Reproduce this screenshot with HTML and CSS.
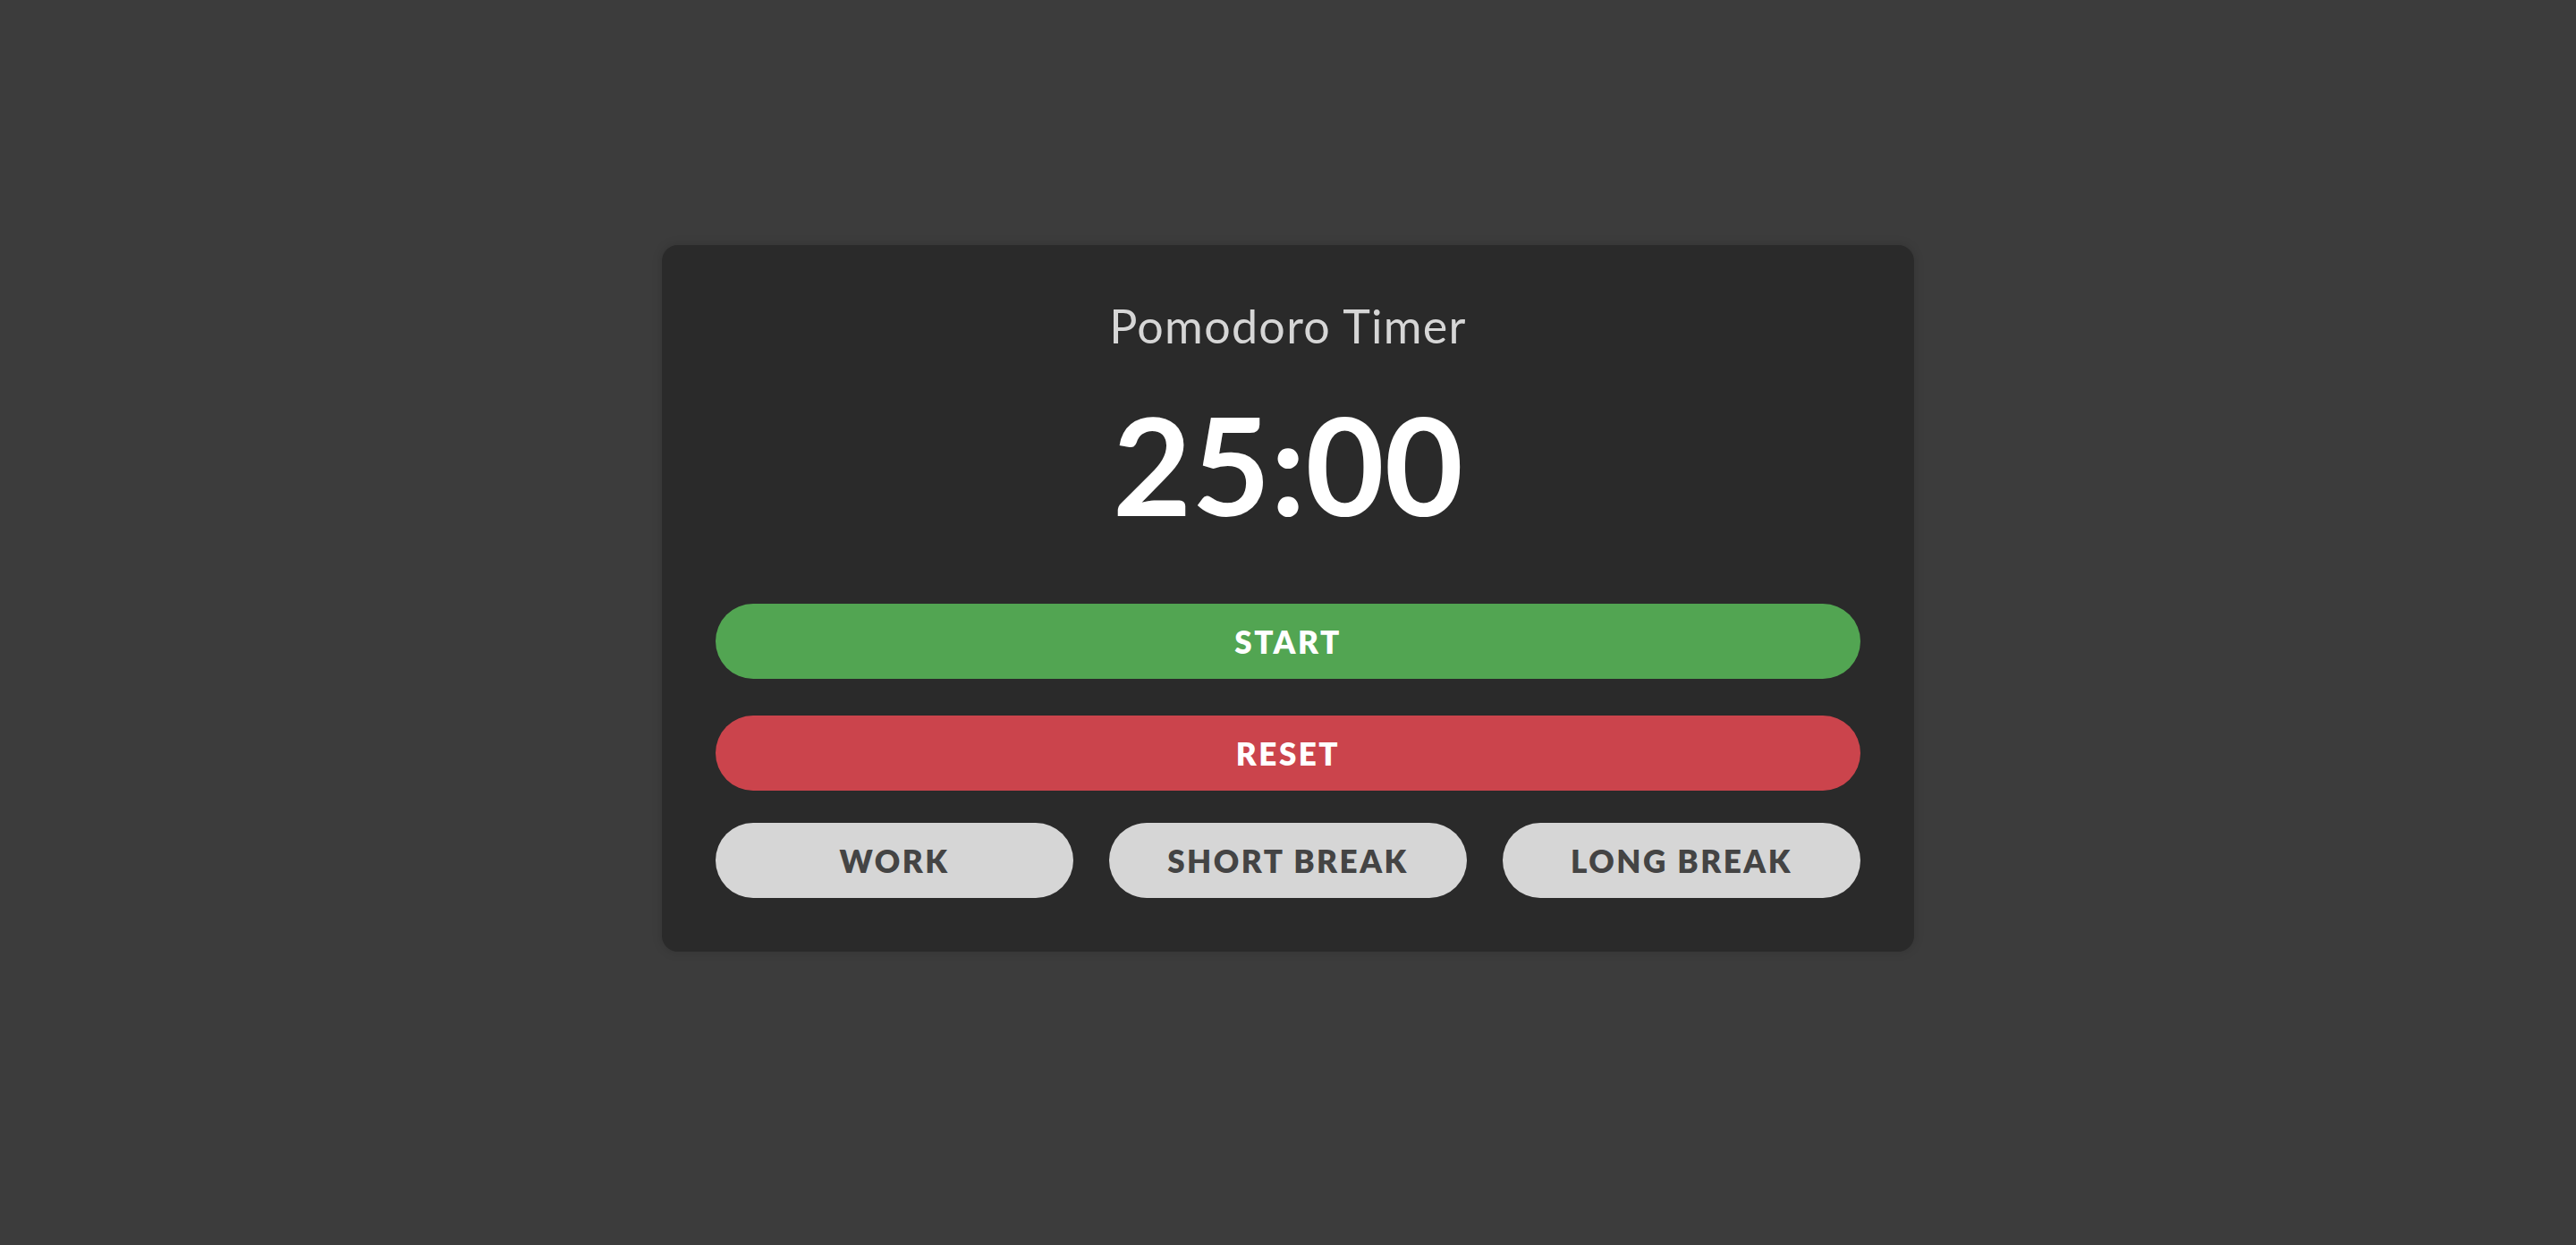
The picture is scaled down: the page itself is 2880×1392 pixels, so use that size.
FILE: index.html
```html
<!DOCTYPE html>
<html>
<head>
<meta charset="utf-8">
<link rel="stylesheet" href="styles.css">
</head>
<body>
  <main class="card">
    <h1 class="title">Pomodoro Timer</h1>
    <div class="time">25:00</div>
    <button class="btn btn-start">START</button>
    <button class="btn btn-reset">RESET</button>
    <div class="modes">
      <button class="btn btn-mode">WORK</button>
      <button class="btn btn-mode">SHORT BREAK</button>
      <button class="btn btn-mode">LONG BREAK</button>
    </div>
  </main>
</body>
</html>
```

FILE: styles.css
```css
html, body {
  margin: 0;
  padding: 0;
}
body {
  background: #3c3c3c;
  min-height: 100vh;
  display: flex;
  flex-direction: column;
  align-items: center;
  padding-top: 274px;
  box-sizing: border-box;
  font-family: "Lato", "Noto Sans", sans-serif;
}
.card {
  width: 1400px;
  box-sizing: border-box;
  background: #2a2a2a;
  border-radius: 18px;
  box-shadow: 0 0 12px rgba(0, 0, 0, 0.15);
  padding: 60px 60px 60px;
  display: flex;
  flex-direction: column;
  align-items: stretch;
}
.title {
  margin: 0;
  text-align: center;
  font-size: 52px;
  font-weight: 400;
  line-height: 60px;
  letter-spacing: 1.3px;
  color: #d6d6d6;
}
.time {
  text-align: center;
  font-size: 152px;
  font-weight: 700;
  line-height: 180px;
  color: #ffffff;
  margin: 34px 0 67px;
}
.btn {
  border: none;
  height: 84px;
  border-radius: 42px;
  font-family: inherit;
  font-size: 35px;
  font-weight: 800;
  letter-spacing: 2.5px;
  color: #ffffff;
  padding: 0;
}
.btn-start {
  background: #52a552;
}
.btn-reset {
  background: #cb444c;
  margin-top: 41px;
}
.modes {
  margin-top: 36px;
  display: grid;
  grid-template-columns: repeat(3, 1fr);
  gap: 40px;
}
.btn-mode {
  background: #d6d6d6;
  color: #444444;
}
```
